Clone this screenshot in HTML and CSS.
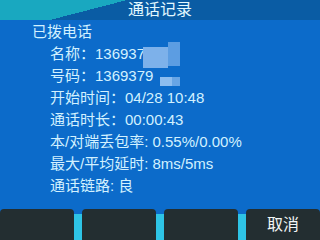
FILE: index.html
```html
<!DOCTYPE html>
<html lang="zh">
<head>
<meta charset="utf-8">
<link rel="stylesheet" href="styles.css">
</head>
<body>
<div class="screen">
  <div class="titlebar">通话记录</div>
  <div class="content">
    <div class="heading">已拨电话</div>
    <div class="row">名称：136937<span class="mask mask-a"></span></div>
    <div class="row">号码：1369379<span class="mask mask-b"></span></div>
    <div class="row">开始时间：04/28 10:48</div>
    <div class="row">通话时长：00:00:43</div>
    <div class="row">本/对端丢包率: 0.55%/0.00%</div>
    <div class="row">最大/平均延时: 8ms/5ms</div>
    <div class="row">通话链路: 良</div>
  </div>
  <div class="softkeys">
    <div class="key"></div>
    <div class="key"></div>
    <div class="key"></div>
    <div class="key">取消</div>
  </div>
</div>
</body>
</html>
```
FILE: styles.css
```css
html, body {
  margin: 0;
  padding: 0;
}
body {
  width: 320px;
  height: 240px;
  overflow: hidden;
  font-family: "Liberation Sans", "Noto Sans CJK SC", sans-serif;
}
.screen {
  width: 320px;
  height: 240px;
  display: flex;
  flex-direction: column;
  background: #0c6bca;
  color: #d2f1ff;
}
.titlebar {
  height: 20px;
  line-height: 20px;
  font-size: 16px;
  text-align: center;
  color: #e2f8ff;
  background:
    linear-gradient(to bottom right, #19a8c0 50%, transparent 50%) 50px 0 / 77px 20px no-repeat,
    linear-gradient(#19a8c0, #19a8c0) 0 0 / 50px 100% no-repeat,
    #0a5ca4;
}
.content {
  padding: 1px 0 0 32px;
  font-size: 15px;
  line-height: 22px;
}
.row {
  position: relative;
  padding-left: 18px;
}
.mask {
  position: absolute;
}
.mask-a {
  left: 111px;
  top: -1px;
  width: 37px;
  height: 26px;
  background:
    linear-gradient(#7db1ea, #7db1ea) 0 5px / 25px 21px no-repeat,
    linear-gradient(#5c9de2, #5c9de2) 25px 0 / 12px 24px no-repeat;
}
.mask-b {
  left: 128px;
  top: 12px;
  width: 20px;
  height: 9px;
  background:
    linear-gradient(#8dbdef, #8dbdef) 0 0 / 12px 9px no-repeat,
    linear-gradient(#68a5e5, #68a5e5) 12px 0 / 8px 9px no-repeat;
}
.softkeys {
  margin-top: auto;
  height: 31px;
  display: grid;
  grid-template-columns: repeat(4, 1fr);
  column-gap: 8px;
  background: linear-gradient(#0c6bca 0 5px, #2ec4e6 5px);
}
.key {
  background: #232e31;
  border-radius: 4px 4px 0 0;
  color: #f2f6f6;
  font-size: 16px;
  line-height: 31px;
  text-align: center;
}
```
